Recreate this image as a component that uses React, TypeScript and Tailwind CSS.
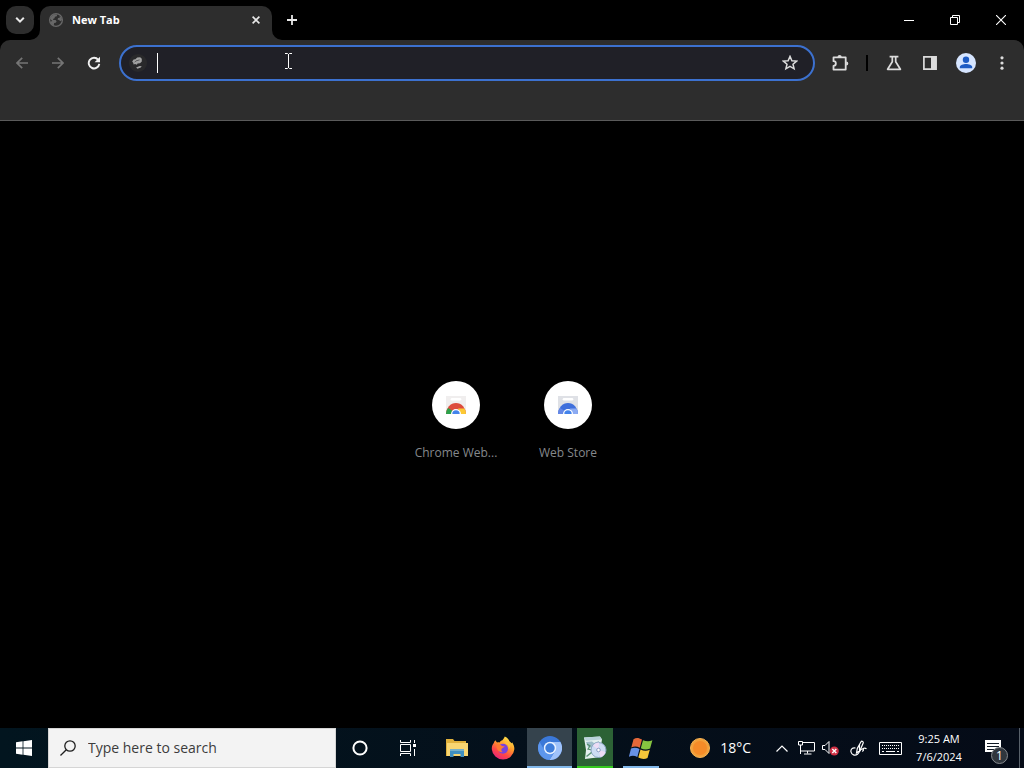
import React, { useState } from 'react';

type IconButtonProps = {
  label: string;
  className?: string;
  children: React.ReactNode;
};

const IconButton = ({ label, className = '', children }: IconButtonProps) => (
  <button
    type="button"
    aria-label={label}
    className={`flex h-9 w-9 shrink-0 items-center justify-center rounded-full ${className}`}
  >
    {children}
  </button>
);

const TabStrip = () => (
  <header className="flex h-10 bg-black text-[#e8e8e8]">
    <button
      type="button"
      aria-label="Search tabs"
      className="mt-1.5 ml-1.5 flex h-7 w-7 shrink-0 items-center justify-center rounded-[10px] bg-[#2d2d2d]"
    >
      <svg width="10" height="8" viewBox="0 0 10 8" fill="none" stroke="currentColor" strokeWidth="2">
        <path d="M1.2 1.8 5 5.6l3.8-3.8" />
      </svg>
    </button>

    <div className="relative mt-1.5 ml-1.5 flex w-58 items-center rounded-t-[10px] bg-[#2d2d2d] pr-2 pb-1.5 pl-2">
      <svg className="absolute bottom-0 -left-2.5" width="10" height="10" viewBox="0 0 10 10" fill="#2d2d2d">
        <path d="M10 0v10H0A10 10 0 0 0 10 0Z" />
      </svg>
      <svg className="absolute -right-2.5 bottom-0" width="10" height="10" viewBox="0 0 10 10" fill="#2d2d2d">
        <path d="M0 0v10h10A10 10 0 0 1 0 0Z" />
      </svg>
      <svg width="16" height="16" viewBox="0 0 16 16">
        <circle cx="8" cy="8" r="6.4" fill="none" stroke="#686868" strokeWidth="1.3" />
        <path
          fill="#686868"
          d="M2 6.8 3.6 4l3-1.8 2.6.2-.4 1.8-1.9.5-.3 1.5-1.6.7.4 1.1h2.2l1 1.4-.9 1.3-1.5.4-.6 2.6-2.3-1.6L2 9.8l2.3-.7L2 6.8Zm9.6-2.7 1.9 1.6.5 2.3-1.5 1.3-1.6-1.2-1.3-.3.4-1.7 1.8-.4-.2-1.6Z"
        />
      </svg>
      <span className="ml-2 flex-1 text-[11px] font-bold text-white">New Tab</span>
      <button type="button" aria-label="Close tab" className="flex h-4 w-4 items-center justify-center">
        <svg width="8" height="8" viewBox="0 0 8 8" stroke="currentColor" strokeWidth="1.6">
          <path d="m.6.6 6.8 6.8M7.400.6.6 7.400" />
        </svg>
      </button>
    </div>

    <button type="button" aria-label="New tab" className="mt-1.5 ml-1.5 flex h-7 w-7 items-center justify-center">
      <svg width="10" height="10" viewBox="0 0 10 10" stroke="currentColor" strokeWidth="1.8">
        <path d="M5 0v10M0 5h10" />
      </svg>
    </button>

    <div className="ml-auto flex text-white">
      <button type="button" aria-label="Minimize" className="flex w-[46px] items-center justify-center">
        <svg width="10" height="10" viewBox="0 0 10 10" fill="currentColor">
          <path d="M0 5h10v1H0z" />
        </svg>
      </button>
      <button type="button" aria-label="Restore" className="flex w-[46px] items-center justify-center">
        <svg width="10" height="10" viewBox="0 0 10 10" fill="none" stroke="currentColor">
          <path d="M.5 2.5h7v7h-7zM2.5 2.5v-2h7v7h-2" />
        </svg>
      </button>
      <button type="button" aria-label="Close" className="flex w-[46px] items-center justify-center">
        <svg width="10" height="10" viewBox="0 0 10 10" stroke="currentColor" strokeWidth="1.1">
          <path d="m0 0 10 10M10 0 0 10" />
        </svg>
      </button>
    </div>
  </header>
);

const Toolbar = () => {
  const [url, setUrl] = useState('');

  return (
    <div className="bg-black">
      <div className="flex h-[81px] items-start rounded-t-[10px] border-b border-[#5a5a5a] bg-[#2d2d2d] px-1 pt-[5px] text-[#dcdcdc]">
        <IconButton label="Back" className="text-[#757575]">
          <svg width="12" height="12" viewBox="0 0 12 12" fill="none" stroke="currentColor" strokeWidth="1.7">
            <path d="M12 6H1.2M6.2.8 1 6l5.2 5.2" />
          </svg>
        </IconButton>
        <IconButton label="Forward" className="text-[#757575]">
          <svg width="12" height="12" viewBox="0 0 12 12" fill="none" stroke="currentColor" strokeWidth="1.7">
            <path d="M0 6h10.8M5.8.8 11 6l-5.2 5.2" />
          </svg>
        </IconButton>
        <IconButton label="Reload" className="text-[#f0f0f0]">
          <svg width="14" height="14" viewBox="0 0 14 14">
            <path d="M11.2 3.8A5.3 5.3 0 1 0 12.3 7.8" fill="none" stroke="currentColor" strokeWidth="1.9" />
            <path d="M13 .8v5.4H7.6z" fill="currentColor" />
          </svg>
        </IconButton>

        <div className="relative mr-[7px] ml-[7px] flex h-9 flex-1 items-center rounded-full border-2 border-[#3c71cf] bg-[#202027] pr-[15px] pl-2">
          <svg className="shrink-0" width="18" height="18" viewBox="0 0 18 18">
            <circle cx="9" cy="9" r="9" fill="#29292b" />
            <path
              fill="#a2a2a2"
              d="m3.200 7.400 1.400-2 1.800-.2 1.800-1.700 3-.3 1.600 1.600v2.600l-1.800 1.800-2.500.2-.6 1.300-1.800-.6-1.500.5-.3-1.600-1.100-1.600Zm3.900 6 3.600-1.400 2 .2-.9 1.300-3.300 1.200-1.400-1.300Z"
            />
            <path d="m5.600 8.300 1.400-1.400 3.600-1" fill="none" stroke="#4a4a4c" strokeWidth=".8" />
          </svg>
          <input
            type="text"
            aria-label="Address and search bar"
            autoFocus
            value={url}
            onChange={(e) => setUrl(e.target.value)}
            className="ml-2.5 h-5 min-w-0 flex-1 border-l border-white bg-transparent text-sm text-white caret-transparent outline-none"
          />
          <button type="button" aria-label="Bookmark this tab" className="flex h-5 w-4 items-center justify-center">
            <svg width="16" height="16" viewBox="0 0 16 16" fill="none" stroke="currentColor" strokeWidth="1.5">
              <path d="m8 1.400 1.900 4.300 4.700.4-3.600 3.100 1.100 4.600L8 11.400l-4.100 2.400L5 9.200 1.400 6.100l4.700-.4z" />
            </svg>
          </button>
          {/* mouse pointer */}
          <svg
            className="absolute top-1.5 left-[164px]"
            width="7"
            height="16"
            viewBox="0 0 7 16"
            fill="none"
            stroke="#fff"
          >
            <path d="M0 .5h2.5l1 1 1-1H7M3.5 1v14M0 15.5h2.5l1-1 1 1H7" />
          </svg>
        </div>

        <IconButton label="Extensions">
          <svg width="18" height="18" viewBox="0 0 18 18">
            <path
              d="M2.500 3.400h12.200v12.200H2.500v-3.700a2.300 2.300 0 0 0 0-4.700z"
              fill="none"
              stroke="currentColor"
              strokeWidth="1.8"
              strokeLinejoin="round"
            />
            <path d="M6.500 3a2.100 2.100 0 0 1 4.200 0zM15.200 7.400a2.100 2.100 0 0 1 0 4.200z" fill="currentColor" />
          </svg>
        </IconButton>
        <div className="mx-2 mt-2.5 h-4 w-0.5 bg-black" />
        <IconButton label="Experiments">
          <svg
            width="16"
            height="16"
            viewBox="0 0 16 16"
            fill="none"
            stroke="currentColor"
            strokeWidth="1.7"
            strokeLinejoin="round"
          >
            <path d="M3.600 1.700h8.800M6.300 2v4.800L1.600 14.300h12.800L9.700 6.800V2" />
          </svg>
        </IconButton>
        <IconButton label="Side panel">
          <svg width="14" height="14" viewBox="0 0 14 14">
            <path d="M.9.9h12.200v12.200H.9z" fill="none" stroke="currentColor" strokeWidth="1.7" />
            <path d="M8 1h5v12H8z" fill="currentColor" />
          </svg>
        </IconButton>
        <IconButton label="Profile">
          <svg width="20" height="20" viewBox="0 0 20 20">
            <circle cx="10" cy="10" r="10" fill="#d6e5ff" />
            <circle cx="10" cy="6.800" r="3.200" fill="#1d5bc4" />
            <path d="M3.800 15.200v-1.100c0-2 3.600-3 6.200-3s6.200 1 6.200 3v1.100z" fill="#1d5bc4" />
          </svg>
        </IconButton>
        <IconButton label="Menu">
          <svg width="4" height="14" viewBox="0 0 4 14" fill="currentColor">
            <circle cx="2" cy="1.800" r="1.600" />
            <circle cx="2" cy="7" r="1.600" />
            <circle cx="2" cy="12.200" r="1.600" />
          </svg>
        </IconButton>
      </div>
    </div>
  );
};

const StoreIcon = ({ colorful }: { colorful?: boolean }) => (
  <svg width="22" height="20" viewBox="0 0 22 20">
    <path d="M1 1h20v18H1z" fill={colorful ? '#f0eeee' : '#dfe1e6'} />
    <path d="M7 3h8a1.300 1.300 0 0 1 0 2.600H7A1.300 1.300 0 0 1 7 3Z" fill="#fff" />
    <path d="M1 19a10 11 0 0 1 20 0z" fill={colorful ? '#dd4b3c' : '#3f6fdc'} />
    {colorful && <path d="M1 19a10 10 0 0 1 2-6l5 3-1.500 3z" fill="#2ba24c" />}
    {colorful && <path d="M21 19a10 10 0 0 0-1.600-5.400H13l2.500 5.400z" fill="#fcc934" />}
    {!colorful && <path d="M1 19a10 10 0 0 1 2-6l5 3-1.500 3z" fill="#6487e6" />}
    {!colorful && <path d="M21 19a10 10 0 0 0-1.600-5.400H13l2.500 5.400z" fill="#8cabf3" />}
    <path d="M6 19a5 5 0 0 1 10 0z" fill="#fff" />
    <path d="M7.300 19a3.700 3.700 0 0 1 7.400 0z" fill="#4383eb" />
  </svg>
);

const shortcuts = [
  { name: 'Chrome Web Store', label: 'Chrome Web...', colorful: true },
  { name: 'Web Store', label: 'Web Store', colorful: false }
];

const NewTabPage = () => (
  <main className="flex flex-1 items-center justify-center bg-black pb-[7px]">
    {shortcuts.map((item) => (
      <a key={item.name} href="#" title={item.name} className="flex h-28 w-28 flex-col items-center pt-4">
        <span className="flex h-12 w-12 items-center justify-center rounded-full bg-white">
          <StoreIcon colorful={item.colorful} />
        </span>
        <span className="mt-3.5 text-xs leading-5 whitespace-nowrap text-[#85888c]">{item.label}</span>
      </a>
    ))}
  </main>
);

const ExplorerIcon = () => (
  <svg width="22" height="18" viewBox="0 0 22 18">
    <path d="M0 0h7l1.500 2H20v15H0z" fill="#e0b13c" />
    <path d="M1 4h21v13H1z" fill="#f8d672" />
    <path d="M4 18v-6.500h14V18h-3.500v-3h-7v3z" fill="#3f8fc0" />
    <path d="M4 10h14v2H4z" fill="#77b0c8" />
  </svg>
);

const FirefoxIcon = () => (
  <svg width="24" height="24" viewBox="0 0 24 24">
    <defs>
      <linearGradient id="fox" x1="0.8" y1="0" x2="0.25" y2="1">
        <stop offset="0" stopColor="#fff14f" />
        <stop offset=".4" stopColor="#ff9a2b" />
        <stop offset=".7" stopColor="#ff4747" />
        <stop offset="1" stopColor="#e5227e" />
      </linearGradient>
    </defs>
    <path
      d="M4.500 4.300c.4 1 .9 1.700 1.600 2.100.9-.3 1.700-.3 2.600 0 .6-1.100 1.600-1.800 2.700-2.100C12.500 3 13.500 1.300 13.800.5c2.800 1.400 4 3.200 4.700 4.700l1.600 1.500c.6.800 1 .6 1-.5 1.700 2.600 2.400 4.800 2.200 7.200A11.300 11.300 0 0 1 .8 13.200c-.1-2.400.6-4.400 2-6.100.2-1 .8-2 1.700-2.800Z"
      fill="url(#fox)"
    />
    <circle cx="12" cy="12.800" r="5" fill="#7a43dc" />
    <path d="M5.500 8.500c2-.8 4.300.2 5.500 1.500l2.800.5-2.500 1.700c-1.200.8-1.500 2.800.4 3.900-3.700 1-6.600-3-6.200-7.600Z" fill="#ff7a32" />
    <path d="M13 7c3.500.2 5.500 3.300 4.500 6.300 1.300-.8 2-2.500 1.700-4.300C17.500 6.500 15.500 6 13 7Z" fill="#ffc53a" />
  </svg>
);

const ChromiumIcon = () => (
  <svg width="24" height="24" viewBox="0 0 24 24">
    <circle cx="12" cy="12" r="12" fill="#3b78d8" />
    <path d="M12 6h10.400A12 12 0 0 1 11.500 24l5.700-9z" fill="#9fc2fa" />
    <path d="M1.600 6A12 12 0 0 0 11.500 24l5.300-9-10-.2z" fill="#5d96ec" />
    <circle cx="12" cy="12" r="6.200" fill="#e8f1ff" />
    <circle cx="12" cy="12" r="4.700" fill="#3e7ddb" />
  </svg>
);

const InstallerIcon = () => (
  <svg width="24" height="24" viewBox="0 0 24 24">
    <path d="M1 1.500 17 .5l2 3-1 6-4 12-12 1.500 1-9z" fill="#e4f0ef" />
    <path d="m1 1.500 16-1 2 3-16 1.300z" fill="#b9d3da" />
    <path d="m3 6 6-.5 2 1.500 5-2v3l-6 4-5-1z" fill="#9dbdc8" />
    <path d="m4 8 3 2-2 3 4 1" fill="none" stroke="#568f6c" strokeWidth="1.200" />
    <circle cx="15.500" cy="14" r="7.500" fill="#cddcf3" stroke="#8ba5c4" />
    <path d="M15.500 14 10 9.500A7.500 7.500 0 0 1 16 6.500zM15.500 14l7 2a7.500 7.500 0 0 1-5 5.200z" fill="#eddcf5" />
    <circle cx="15.500" cy="14" r="1.800" fill="#fff" stroke="#8b9cc4" />
    <path d="m3.500 20.500 5-4" stroke="#5c9476" strokeWidth="1.600" />
  </svg>
);

const FlagIcon = () => (
  <svg width="25" height="23" viewBox="0 0 25 23">
    <path d="M4.500 2.200C7.500.3 10 1 13 2.600l-2.200 8.200C8 9.300 5.500 9 2.300 10.500z" fill="#e5683a" />
    <path d="M14 3.200c3.200 1.300 6.200 1.600 9.400 0l-2.300 8.300c-3 1.500-6.200 1.400-9.300-.2z" fill="#86c440" />
    <path d="M2 11.600c3-1.500 5.700-1 8.500.3L8.300 20C5.500 18.500 3 18.300-.1 19.700z" fill="#6791e6" />
    <path d="M11.500 12.400c3.100 1.500 6.200 1.700 9.300.3L18.500 21c-3 1.400-6 1.200-9.200-.5z" fill="#f5c63a" />
  </svg>
);

const TrayButton = ({ label, className, children }: IconButtonProps) => (
  <button type="button" aria-label={label} className={`flex items-center justify-center ${className}`}>
    {children}
  </button>
);

const Taskbar = () => {
  const [query, setQuery] = useState('');

  return (
    <footer className="flex h-10 items-stretch bg-linear-to-r from-[#02151f] to-[#050b17] text-white">
      <TrayButton label="Start" className="w-12">
        <svg width="16" height="16" viewBox="0 0 16 16" fill="#fff">
          <path d="M0 2.200 6.600 1.300v6.200H0zM7.400 1.200 16 0v7.500H7.400zM0 8.400h6.600v6.300L0 13.800zM7.400 8.400H16V16l-8.600-1.200z" />
        </svg>
      </TrayButton>

      <label className="flex w-72 items-center border border-[#d5d5d5] bg-[#f3f3f3] pl-[11px]">
        <svg width="16" height="16" viewBox="0 0 16 16" fill="none" stroke="#1f1f1f" strokeWidth="1.300">
          <circle cx="10" cy="6" r="5.200" />
          <path d="M6.300 9.700.5 15.500" />
        </svg>
        <input
          type="text"
          aria-label="Type here to search"
          placeholder="Type here to search"
          value={query}
          onChange={(e) => setQuery(e.target.value)}
          className="ml-3 min-w-0 flex-1 bg-transparent text-sm text-[#3c3c3c] placeholder-[#3c3c3c] outline-none"
        />
      </label>

      <TrayButton label="Cortana" className="w-12">
        <svg width="16" height="16" viewBox="0 0 16 16" fill="none" stroke="#fff" strokeWidth="2">
          <circle cx="8" cy="8" r="6.600" />
        </svg>
      </TrayButton>
      <TrayButton label="Task view" className="w-12">
        <svg width="16" height="16" viewBox="0 0 16 16" fill="none" stroke="#fff">
          <path d="M.5 0v2.500h10V0M.5 4.500h10v7H.5zM.5 16v-2.500h10V16M14.500 0v3M14.500 9v7" />
          <path d="M13 4h3v3h-3z" fill="#fff" stroke="none" />
        </svg>
      </TrayButton>
      <TrayButton label="File Explorer" className="w-[49px]">
        <ExplorerIcon />
      </TrayButton>
      <TrayButton label="Firefox" className="w-11">
        <FirefoxIcon />
      </TrayButton>
      <TrayButton label="Chromium" className="ml-0.5 w-[45px] border-b-2 border-[#82b8ea] bg-[#35434d] pt-0.5">
        <ChromiumIcon />
      </TrayButton>
      <TrayButton label="Installer" className="ml-[5px] w-9 border-b-2 border-[#35c91f] bg-[#2c6235] pt-0.5">
        <InstallerIcon />
      </TrayButton>
      <TrayButton label="Windows" className="ml-2.5 w-9 border-b-2 border-[#82b8ea] pt-0.5">
        <FlagIcon />
      </TrayButton>

      <div className="ml-auto flex items-stretch">
        <button type="button" className="mr-[19px] flex items-center gap-2.5 text-sm">
          <svg width="20" height="20" viewBox="0 0 20 20">
            <circle cx="10" cy="10" r="9.500" fill="#f2a03a" stroke="#f7b355" />
            <circle cx="10" cy="10" r="7" fill="#f58b28" />
          </svg>
          18°C
        </button>
        <TrayButton label="Show hidden icons" className="w-6">
          <svg width="12" height="7" viewBox="0 0 12 7" fill="none" stroke="#fff" strokeWidth="1.200">
            <path d="M.5 6.500 6 1l5.500 5.500" />
          </svg>
        </TrayButton>
        <TrayButton label="Network" className="w-6">
          <svg width="17" height="14" viewBox="0 0 17 14" fill="none" stroke="#fff">
            <path d="M5 1.500h11.500v8.500H3M.5.500h4v3.500h-4zM2.500 4v9M9.500 10v2.500M6 13h7.500" />
          </svg>
        </TrayButton>
        <TrayButton label="Volume muted" className="w-6">
          <svg width="17" height="15" viewBox="0 0 17 15">
            <path d="M.5 4.500H3l4-4v12l-4-4H.5z" fill="none" stroke="#fff" />
            <circle cx="12.300" cy="10" r="4.500" fill="#cf3044" />
            <path d="m10.300 8 4 4M14.300 8l-4 4" stroke="#fff" strokeWidth="1.400" />
          </svg>
        </TrayButton>
        <TrayButton label="Ink workspace" className="w-8">
          <svg width="17" height="17" viewBox="0 0 17 17" fill="none" stroke="#fff" strokeWidth="1.200">
            <path d="m6.500 13 .8-4.500L11 1.800c.8-1.200 2.800-.2 2.200 1.200L10 10.500zM9.500 4.500v7" />
            <path d="M5.500 8C2 7.500.5 9.500 1 12c.6 2.800 4 4 6.500 2.200 2.500-1.900 2.200-4.700 4.500-5.200 2-.4 1.800 2.500 0 2.200M13 8.500c1.200-.7 2.500-.5 3.500.2" />
          </svg>
        </TrayButton>
        <TrayButton label="Touch keyboard" className="w-8">
          <svg width="23" height="13" viewBox="0 0 23 13" fill="none" stroke="#fff">
            <path d="M.5.500h22v12H.5z" />
            <path d="M3 3.500h17M3 6.500h17" strokeDasharray="1 1" />
            <path d="M3 9.500h2M7 9.500h9M18 9.500h2" />
          </svg>
        </TrayButton>
        <button type="button" className="ml-px w-16 text-center text-[11px] leading-[18px]">
          9:25 AM
          <br />
          7/6/2024
        </button>
        <button type="button" aria-label="1 notification" className="relative flex w-[43px] items-center justify-center">
          <svg width="16" height="16" viewBox="0 0 16 16">
            <path d="M0 0h16v12h-5l-4 4v-4H0z" fill="#fff" />
            <path d="M2 3.500h12M2 6.500h12M2 9.500h8" stroke="#111a25" />
          </svg>
          <span className="absolute right-1.5 bottom-1 flex h-[17px] w-[17px] items-center justify-center rounded-full border border-[#85898e] bg-[#30363d] text-xs leading-none">
            1
          </span>
        </button>
        <div className="mr-1 ml-[5px] border-l border-[#59616a]" />
      </div>
    </footer>
  );
};

const App = () => (
  <div className="flex min-h-screen flex-col bg-black font-['Open_Sans','Noto_Sans',sans-serif]">
    <TabStrip />
    <Toolbar />
    <NewTabPage />
    <Taskbar />
  </div>
);

export default App;
